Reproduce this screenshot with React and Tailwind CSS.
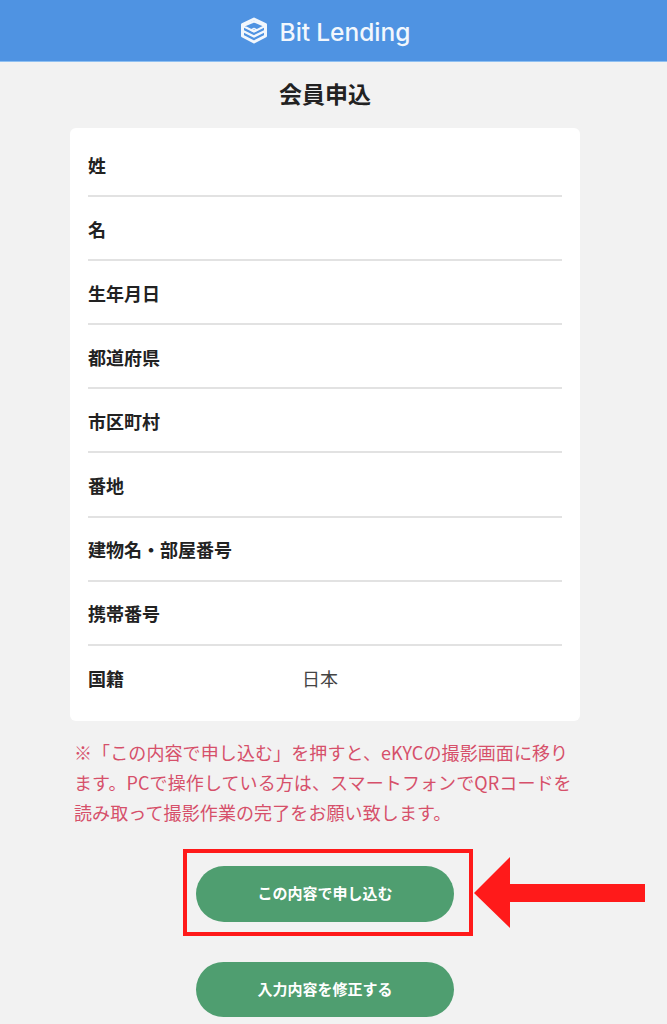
import React from 'react';

const rows = [
  { label: '姓' },
  { label: '名' },
  { label: '生年月日' },
  { label: '都道府県' },
  { label: '市区町村' },
  { label: '番地' },
  { label: '建物名・部屋番号' },
  { label: '携帯番号' },
  { label: '国籍', value: '日本' },
];

function Logo() {
  return (
    <svg width="28" height="27" viewBox="0 0 28 27" fill="none" stroke="#f2f7fd" strokeLinejoin="round">
      <path d="M14 2 L25.5 7.5 V19 L14 25 L2.5 19 V7.5 Z" strokeWidth="3" />
      <path d="M3 9 L14 4.5 L25 9 L14 14.5 Z" fill="#4f93e2" strokeWidth="2" />
      <path d="M3 14 L14 19.5 L25 14" strokeWidth="2.5" />
      <path d="M11 13 L14 11.5 L17 13 L14 14.5 Z" strokeWidth="1.5" />
    </svg>
  );
}

export default function App() {
  return (
    <div
      className="relative w-[667px] h-[1024px] overflow-hidden bg-[#f2f2f2]"
      style={{ fontFamily: '"Noto Sans CJK JP", "Noto Sans", sans-serif' }}
    >
      <header className="h-[62px] bg-[#4f93e2] flex items-center justify-center gap-[12px] pr-[17px] border-b border-[#8fc0f2]">
        <Logo />
        <span className="mt-[3px] text-[24.5px] leading-none font-medium text-[#f2f7fd]" style={{ fontFamily: 'Inter, sans-serif' }}>
          Bit<span className="ml-[6px]">Lending</span>
        </span>
      </header>

      <h1 className="mt-[14px] w-[650px] h-[34px] leading-[34px] text-center text-[23px] font-bold text-[#222]">会員申込</h1>

      <div className="mt-[18px] ml-[70px] w-[510px] h-[593px] bg-white rounded-[6px] px-[18px] pt-[5px] flex flex-col">
        {rows.map((row, i) => (
          <div
            key={row.label}
            className={`flex items-center shrink-0 h-[64.1px] pt-[2px] ${i < rows.length - 1 ? 'border-b-2 border-[#e2e2e2]' : ''}`}
          >
            <div className="w-[214px] text-[18px] font-bold text-[#222]">{row.label}</div>
            <div className="text-[18px] text-[#444]">{row.value}</div>
          </div>
        ))}
      </div>

      <p className="mt-[16px] ml-[74px] w-[508px] text-[18px] leading-[30px] tracking-[0.1px] text-[#d6506a]">
        ※「この内容で申し込む」を押すと、eKYCの撮影画面に移ります。PCで操作している方は、スマートフォンでQRコードを読み取って撮影作業の完了をお願い致します。
      </p>

      <div className="mt-[22px] ml-[183px] w-[290px] h-[87px] border-4 border-[#ff1a1a] flex items-center pl-[9px] pt-[2px]">
        <button className="w-[258px] h-[56px] rounded-full bg-[#4f9e70] text-white text-[15px] font-bold">
          この内容で申し込む
        </button>
      </div>

      <button className="block mt-[26px] ml-[196px] w-[258px] h-[55px] rounded-full bg-[#4f9e70] text-white text-[15px] font-bold">
        入力内容を修正する
      </button>

      {/* annotation arrow on top of the screenshot */}
      <svg className="absolute left-[474px] top-[856px]" width="172" height="73" viewBox="0 0 172 73">
        <path d="M0 37 L36 1 V28 H171 V46 H36 V72 Z" fill="#ff1a1a" />
      </svg>
    </div>
  );
}
